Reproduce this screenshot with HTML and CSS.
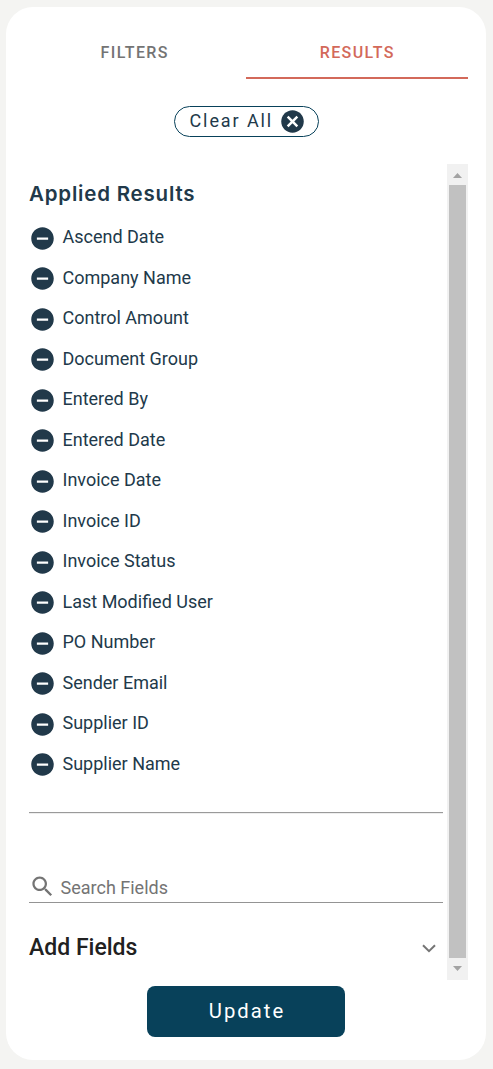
FILE: index.html
```html
<!DOCTYPE html>
<html lang="en">
<head>
  <meta charset="UTF-8">
  <meta name="viewport" content="width=device-width, initial-scale=1.0">
  <title>Results</title>
  <link rel="stylesheet" href="styles.css">
</head>
<body>
  <svg class="sprite" width="0" height="0">
    <symbol id="minus" viewBox="0 0 24 24">
      <path d="M12 2C6.48 2 2 6.48 2 12s4.48 10 10 10 10-4.48 10-10S17.52 2 12 2zm5 11H7v-2h10v2z"/>
    </symbol>
  </svg>
  <div class="panel">
    <div class="tabs">
      <button class="tab">FILTERS</button>
      <button class="tab active">RESULTS</button>
    </div>
    <button class="clear-all">
      <span>Clear All</span>
      <svg width="27" height="27" viewBox="0 0 24 24"><path d="M12 2C6.47 2 2 6.47 2 12s4.47 10 10 10 10-4.47 10-10S17.53 2 12 2z"/><path class="cross" d="M7.7 7.7l8.6 8.6M16.3 7.7l-8.6 8.6"/></svg>
    </button>

    <div class="scroll-area">
      <div class="content">
        <h2>Applied Results</h2>
        <ul class="fields">
          <li><svg><use href="#minus"/></svg><span>Ascend Date</span></li>
          <li><svg><use href="#minus"/></svg><span>Company Name</span></li>
          <li><svg><use href="#minus"/></svg><span>Control Amount</span></li>
          <li><svg><use href="#minus"/></svg><span>Document Group</span></li>
          <li><svg><use href="#minus"/></svg><span>Entered By</span></li>
          <li><svg><use href="#minus"/></svg><span>Entered Date</span></li>
          <li><svg><use href="#minus"/></svg><span>Invoice Date</span></li>
          <li><svg><use href="#minus"/></svg><span>Invoice ID</span></li>
          <li><svg><use href="#minus"/></svg><span>Invoice Status</span></li>
          <li><svg><use href="#minus"/></svg><span>Last Modified User</span></li>
          <li><svg><use href="#minus"/></svg><span>PO Number</span></li>
          <li><svg><use href="#minus"/></svg><span>Sender Email</span></li>
          <li><svg><use href="#minus"/></svg><span>Supplier ID</span></li>
          <li><svg><use href="#minus"/></svg><span>Supplier Name</span></li>
        </ul>
        <hr>
        <div class="search">
          <svg width="27" height="27" viewBox="0 0 24 24"><path d="M15.5 14h-.79l-.28-.27C15.41 12.59 16 11.11 16 9.5 16 5.91 13.09 3 9.5 3S3 5.91 3 9.5 5.91 16 9.5 16c1.61 0 3.09-.59 4.23-1.57l.27.28v.79l5 4.99L20.49 19l-4.99-5zm-6 0C7.01 14 5 11.99 5 9.5S7.01 5 9.5 5 14 7.01 14 9.5 11.99 14 9.5 14z"/></svg>
          <span>Search Fields</span>
        </div>
        <div class="add-fields">
          <h3>Add Fields</h3>
          <svg width="14" height="9" viewBox="0 0 14 9"><path d="M1 1.2l6 6 6-6"/></svg>
        </div>
      </div>
      <div class="scrollbar">
        <svg width="9" height="5" viewBox="0 0 9 5"><path d="M0 5L4.5 0 9 5z"/></svg>
        <div class="thumb"></div>
        <svg width="9" height="5" viewBox="0 0 9 5"><path d="M0 0h9L4.5 5z"/></svg>
      </div>
    </div>

    <button class="update">Update</button>
  </div>
</body>
</html>
```
FILE: styles.css
```css
* {
  box-sizing: border-box;
}

body {
  margin: 0;
  padding: 7px 7px 9px 6px;
  height: 1069px;
  background: #f4f4f2;
  font-family: Roboto, sans-serif;
  color: #21394a;
}

button {
  font-family: inherit;
  padding: 0;
  border: none;
  background: none;
}

svg {
  display: block;
  flex: none;
}

.sprite {
  position: absolute;
}

.panel {
  display: flex;
  flex-direction: column;
  height: 1053px;
  padding: 18px 18px 23px 17px;
  border-radius: 27px;
  background: #fff;
}

.tabs {
  display: grid;
  grid-template-columns: 1fr 1fr;
  height: 54px;
}

.tab {
  padding: 2px 0 0 1px;
  border-bottom: 2px solid transparent;
  color: #747474;
  font-size: 16px;
  font-weight: 500;
  letter-spacing: 1.4px;
}

.tab.active {
  color: #d3695a;
  border-bottom-color: #d3695a;
}

.clear-all {
  display: flex;
  align-items: center;
  align-self: center;
  width: 145px;
  height: 31px;
  margin: 27px 0 27px 1px;
  padding-left: 15px;
  border: 1px solid #08415a;
  border-radius: 16px;
  color: #21394a;
  font-size: 18px;
  letter-spacing: 1.9px;
}

.clear-all span {
  width: 89.5px;
  padding-bottom: 2px;
  text-align: left;
  white-space: nowrap;
}

.clear-all svg {
  fill: #21394a;
}

.clear-all .cross {
  stroke: #fff;
  stroke-width: 2.2;
}

.scroll-area {
  display: flex;
  justify-content: space-between;
  height: 816px;
}

.content {
  width: 420px;
  padding-left: 6px;
}

h2 {
  margin: 0;
  padding-top: 16px;
  height: 52.5px;
  font-family: Inter, sans-serif;
  font-size: 20.5px;
  font-weight: 600;
  line-height: 28px;
  letter-spacing: 0.8px;
}

.fields {
  list-style: none;
  margin: 0;
  padding: 0;
}

.fields li {
  display: flex;
  align-items: center;
  height: 40.5px;
  font-size: 18px;
}

.fields svg {
  width: 27px;
  height: 27px;
  margin: 3px 6.5px 0 0;
  fill: #21394a;
}

hr {
  margin: 28.5px 0 0;
  border: none;
  height: 2px;
  background: #9a9a9a;
  border-bottom: 1px solid #eee;
}

.search {
  display: flex;
  align-items: center;
  height: 33px;
  margin-top: 56px;
  border-bottom: 1px solid #949494;
  color: #747474;
  font-size: 18px;
}

.search svg {
  margin-right: 4.5px;
  fill: #747474;
}

.search span {
  padding-top: 2px;
}

.add-fields {
  display: flex;
  justify-content: space-between;
  align-items: center;
  height: 50px;
  margin-top: 20px;
  padding-right: 7px;
}

.add-fields h3 {
  margin: 0;
  padding-bottom: 2px;
  color: #212121;
  font-size: 23px;
  font-weight: 500;
}

.add-fields svg {
  fill: none;
  margin-top: 1px;
  stroke: #757575;
  stroke-width: 2;
}

.scrollbar {
  display: flex;
  flex-direction: column;
  justify-content: space-between;
  align-items: center;
  width: 21px;
  padding: 9px 0;
  background: #f1f1f1;
}

.scrollbar svg {
  fill: #a3a3a3;
}

.thumb {
  width: 17px;
  height: 773px;
  margin-bottom: 1px;
  background: #c1c1c1;
}

.update {
  align-self: center;
  width: 198px;
  height: 51px;
  margin-top: 6px;
  padding: 0 0 2px 3px;
  border-radius: 8px;
  background: #08415a;
  color: #fff;
  font-size: 20.25px;
  font-weight: 400;
  letter-spacing: 2px;
}
```
